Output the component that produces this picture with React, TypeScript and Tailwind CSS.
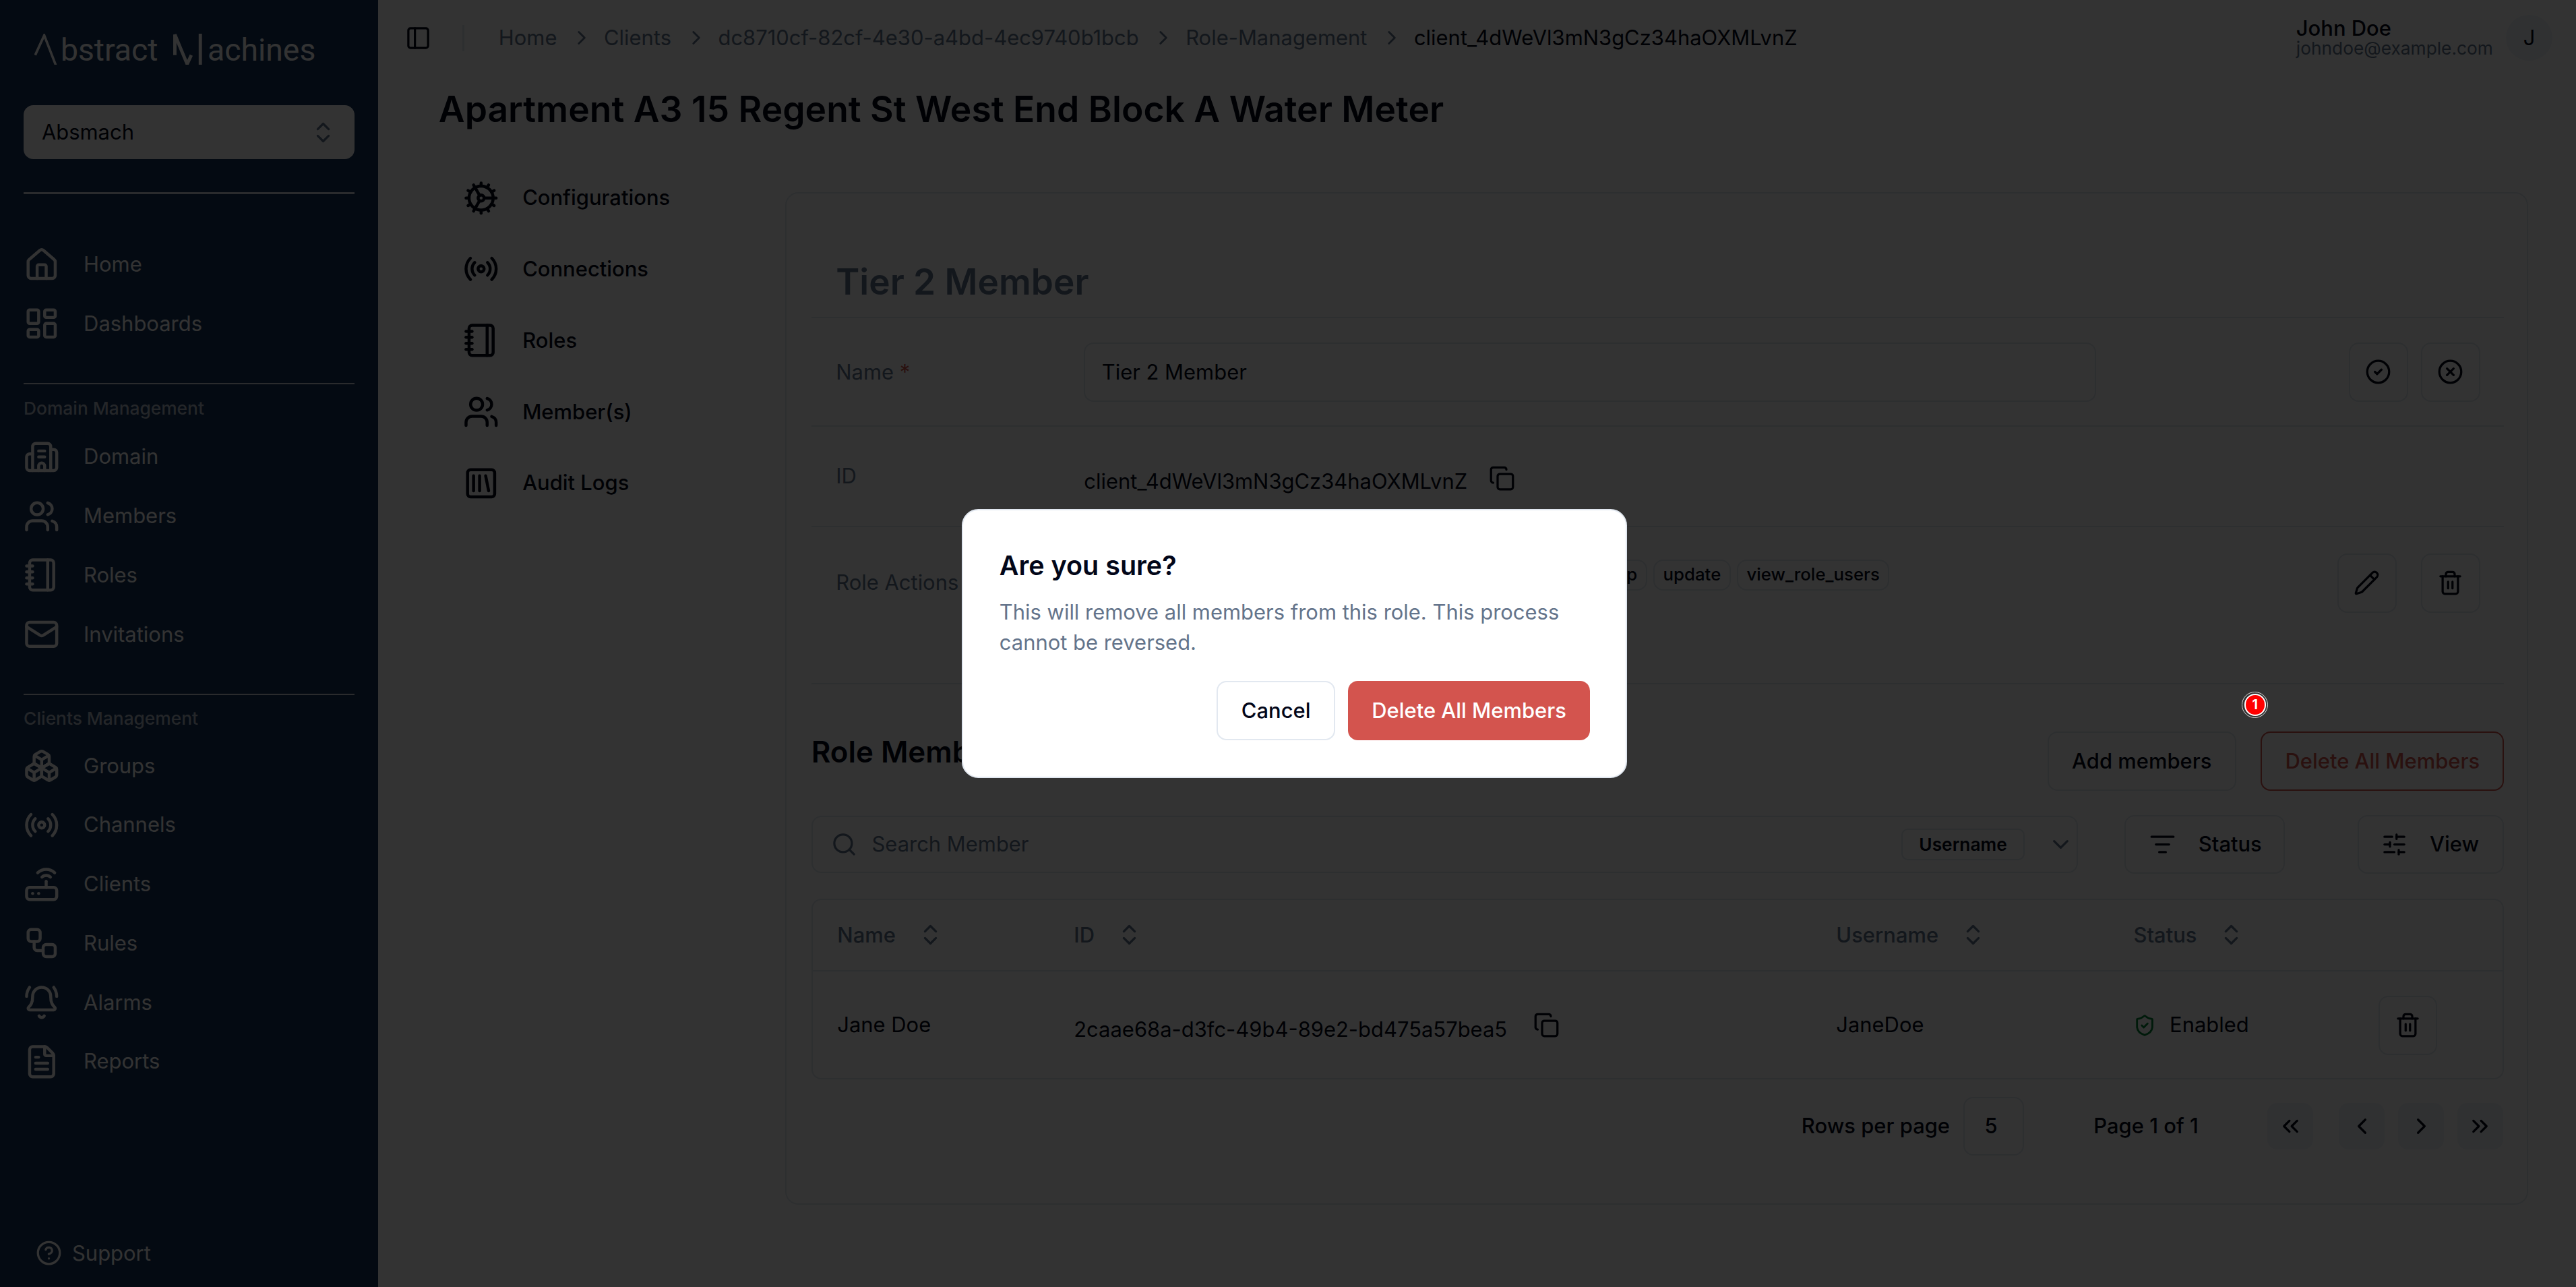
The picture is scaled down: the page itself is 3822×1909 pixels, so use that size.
import {
  BellRing,
  Boxes,
  Building2,
  ChevronDown,
  ChevronLeft,
  ChevronRight,
  ChevronsLeft,
  ChevronsRight,
  ChevronsUpDown,
  CircleCheck,
  CircleHelp,
  CircleX,
  Cog,
  Copy,
  FileText,
  House,
  LayoutDashboard,
  ListFilter,
  Mail,
  Notebook,
  PanelLeft,
  Pencil,
  Radio,
  Router,
  Search,
  ShieldCheck,
  SlidersHorizontal,
  SquareLibrary,
  Trash2,
  Users,
  Workflow,
} from 'lucide-react';

const mainNav = [
  { label: 'Home', icon: House },
  { label: 'Dashboards', icon: LayoutDashboard },
];
const domainNav = [
  { label: 'Domain', icon: Building2 },
  { label: 'Members', icon: Users },
  { label: 'Roles', icon: Notebook },
  { label: 'Invitations', icon: Mail },
];
const clientsNav = [
  { label: 'Groups', icon: Boxes },
  { label: 'Channels', icon: Radio },
  { label: 'Clients', icon: Router },
  { label: 'Rules', icon: Workflow },
  { label: 'Alarms', icon: BellRing },
  { label: 'Reports', icon: FileText },
];
const entityNav = [
  { label: 'Configurations', icon: Cog },
  { label: 'Connections', icon: Radio },
  { label: 'Roles', icon: Notebook },
  { label: 'Member(s)', icon: Users },
  { label: 'Audit Logs', icon: SquareLibrary },
];
const crumbs = ['Home', 'Clients', 'dc8710cf-82cf-4e30-a4bd-4ec9740b1bcb', 'Role-Management'];
const actions = ['read', 'delete', 'manage_role', 'add_role_users', 'remove_group', 'update', 'view_role_users'];

function NavRow({ label, icon: Icon }: { label: string; icon: any }) {
  return (
    <div className="flex h-9 items-center gap-[14.5px] text-[12.7px]">
      <Icon className="size-[22px] shrink-0" />
      <span>{label}</span>
    </div>
  );
}

function IconButton({ children }: { children: any }) {
  return (
    <button className="flex size-9 items-center justify-center rounded-md border border-slate-200">
      {children}
    </button>
  );
}

function PageButton({ children }: { children: any }) {
  return (
    <button className="flex size-7 items-center justify-center rounded-md bg-slate-100">
      {children}
    </button>
  );
}

function SortHead({ label }: { label: string }) {
  return (
    <div className="flex items-center gap-[13px] font-medium text-slate-500">
      {label}
      <ChevronsUpDown className="size-4" />
    </div>
  );
}

function Logo() {
  return (
    <div className="flex h-[64px] items-start pl-[6.5px] pt-[20.5px] text-[19px] leading-[19px] text-white [font-family:Roboto,sans-serif]">
      <svg width="14" height="19" viewBox="0 0 14 19" fill="none" stroke="currentColor" strokeWidth="1.5" className="shrink-0">
        <path d="M0.5 13 L6 1 L13 19" />
      </svg>
      <span className="ml-[2px] mt-[0.5px] w-[68.5px]">bstract</span>
      <svg width="18" height="19" viewBox="0 0 18 19" fill="none" stroke="currentColor" strokeWidth="1.5" className="shrink-0">
        <path d="M1 13 V0.5 L8.5 18.5 L11 13 M16.5 0 V19" strokeWidth="2" />
      </svg>
      <span className="ml-[3px] mt-[0.5px]">achines</span>
    </div>
  );
}

function Sidebar() {
  return (
    <aside className="flex h-full w-[230px] shrink-0 flex-col bg-[#14325a] px-[14.4px] text-white">
      <Logo />
      <div className="flex h-[33px] items-center justify-between rounded-md bg-white pl-[11px] pr-[11px] text-[12.7px] text-slate-950">
        <span>Absmach</span>
        <ChevronsUpDown className="size-4 text-slate-500" />
      </div>
      <div className="mt-5 h-px bg-white/80" />
      <nav className="mt-[25px]">
        {mainNav.map(item => (
          <NavRow key={item.label} {...item} />
        ))}
      </nav>
      <div className="mt-[18px] h-px bg-white/80" />
      <div className="mt-[6.5px] h-4 text-[10.8px] font-medium leading-4 text-white/70">Domain Management</div>
      <nav className="mt-[3.5px]">
        {domainNav.map(item => (
          <NavRow key={item.label} {...item} />
        ))}
      </nav>
      <div className="mt-[18px] h-px bg-white/80" />
      <div className="mt-[6px] h-4 text-[10.8px] font-medium leading-4 text-white/70">Clients Management</div>
      <nav className="mt-[3px]">
        {clientsNav.map(item => (
          <NavRow key={item.label} {...item} />
        ))}
      </nav>
      <div className="mb-[11px] ml-[7.5px] mt-auto flex items-center gap-[6px] text-[12.7px]">
        <CircleHelp className="size-4" />
        <span>Support</span>
      </div>
    </aside>
  );
}

function Header() {
  return (
    <header className="flex h-[46px] items-center pl-[16.5px] pr-[14.5px] text-[12.7px]">
      <PanelLeft className="size-4 text-slate-950" />
      <div className="ml-[19px] h-4 w-px bg-slate-200" />
      <div className="ml-[21px] flex items-center gap-[6.5px] text-slate-500">
        {crumbs.map(c => (
          <div key={c} className="flex items-center gap-[8px]">
            <span>{c}</span>
            <ChevronRight className="size-3.5" />
          </div>
        ))}
        <span className="text-slate-950">client_4dWeVl3mN3gCz34haOXMLvnZ</span>
      </div>
      <div className="ml-auto flex items-center gap-[8px]">
        <div className="flex flex-col">
          <span className="text-[12.7px] font-medium leading-[13px] text-slate-950">John Doe</span>
          <span className="text-[10.8px] leading-[12px] text-slate-500">johndoe@example.com</span>
        </div>
        <div className="flex size-7 items-center justify-center rounded-full bg-slate-100 text-slate-950">J</div>
      </div>
    </header>
  );
}

function RoleCard() {
  return (
    <section className="mt-[19px] h-[616px] w-[1061px] rounded-lg border border-slate-200 pl-[15px] pr-[14px] text-[12.7px]">
      <div className="flex h-[76px] items-center border-b border-slate-200 px-[15px] pt-[33px]">
        <h2 className="text-[21.8px] font-semibold text-slate-500">Tier 2 Member</h2>
      </div>

      {/* Name row */}
      <div className="flex h-[66px] items-center border-b border-slate-200 pl-[15px] pr-[14.5px]">
        <div className="w-[151px] text-slate-500">
          Name <span className="text-[#d3544e]">*</span>
        </div>
        <div className="flex h-9 w-[616px] items-center rounded-md border border-slate-200 px-[10px] text-slate-950">Tier 2 Member</div>
        <div className="ml-auto flex gap-2">
          <IconButton><CircleCheck className="size-4 text-slate-950" /></IconButton>
          <IconButton><CircleX className="size-4 text-slate-950" /></IconButton>
        </div>
      </div>

      {/* ID row */}
      <div className="flex h-[61px] items-center border-b border-slate-200 px-[15px]">
        <div className="w-[151px] text-slate-500">ID</div>
        <span className="mt-[6.5px] text-slate-950">client_4dWeVl3mN3gCz34haOXMLvnZ</span>
        <Copy className="ml-[13px] mt-[2.5px] size-4 text-slate-950" />
      </div>

      {/* Actions row */}
      <div className="flex h-[95.5px] items-start border-b border-slate-200 pl-[15px] pr-[14.5px] pt-4">
        <div className="mt-[8px] w-[151px] text-slate-500">Role Actions</div>
        <div className="mt-[3.5px] flex gap-1">
          {actions.map(a => (
            <span key={a} className="flex h-[19px] items-center rounded-md border border-slate-200 px-[5px] text-[10.6px] font-medium text-slate-950">
              {a}
            </span>
          ))}
        </div>
        <div className="ml-auto flex gap-[15px]">
          <IconButton><Pencil className="size-4 text-slate-950" /></IconButton>
          <IconButton><Trash2 className="size-4 text-slate-950" /></IconButton>
        </div>
      </div>

      {/* Members */}
      <div className="mt-[29px] flex items-start justify-between">
        <h3 className="-mt-[1.5px] text-[18px] font-semibold leading-7 text-slate-950">Role Members</h3>
        <div className="flex gap-[15px] font-medium">
          <button className="h-9 w-[115px] rounded-md border border-slate-200 text-slate-950">Add members</button>
          <button className="h-9 w-[148px] rounded-md border border-[#d3544e] text-[#d3544e]">Delete All Members</button>
        </div>
      </div>

      <div className="mt-[14.5px] flex h-9 items-center">
        <div className="flex h-[35px] w-[771px] items-center rounded-md border border-slate-200 pl-[11px] pr-[1.5px]">
          <Search className="size-4 text-slate-500" />
          <span className="ml-[9px] text-slate-500">Search Member</span>
          <span className="ml-auto flex h-[19px] items-center rounded-sm border border-slate-200 px-[10px] text-[10.8px] font-semibold text-slate-950">Username</span>
          <ChevronDown className="ml-[14px] size-4 text-slate-500" />
        </div>
        <button className="ml-[28.5px] flex h-9 w-[97.5px] items-center rounded-md border border-slate-200 pl-[14px] font-medium text-slate-950">
          <ListFilter className="size-4" />
          <span className="ml-[14px]">Status</span>
        </button>
        <button className="ml-auto flex h-9 w-[89px] items-center rounded-md border border-slate-200 pl-[13.5px] font-medium text-slate-950">
          <SlidersHorizontal className="size-4" />
          <span className="ml-[13.5px]">View</span>
        </button>
      </div>

      <div className="mt-[15px] h-[110px] rounded-md border border-slate-200">
        <table className="w-full table-fixed border-collapse">
          <thead>
            <tr className="h-[43px] border-b border-slate-200">
              <th className="w-[144px] pl-[15px] text-left font-normal"><SortHead label="Name" /></th>
              <th className="w-[464px] pl-[15px] text-left font-normal"><SortHead label="ID" /></th>
              <th className="w-[181px] pl-[15px] text-left font-normal"><SortHead label="Username" /></th>
              <th className="w-[150px] pl-[15px] text-left font-normal"><SortHead label="Status" /></th>
              <th />
            </tr>
          </thead>
          <tbody>
            <tr className="h-[66px] text-slate-950">
              <td className="pl-[15px]">Jane Doe</td>
              <td className="pl-[15px]">
                <div className="flex items-center">
                  <span className="mt-[5px]">2caae68a-d3fc-49b4-89e2-bd475a57bea5</span>
                  <Copy className="ml-4 size-4" />
                </div>
              </td>
              <td className="pl-[15px]">JaneDoe</td>
              <td className="pl-[15px]">
                <div className="flex items-center gap-[8px]">
                  <ShieldCheck className="size-[14px] text-green-700" />
                  Enabled
                </div>
              </td>
              <td className="pl-[14px]">
                <IconButton><Trash2 className="size-4" /></IconButton>
              </td>
            </tr>
          </tbody>
        </table>
      </div>

      <div className="mt-[10.5px] flex items-center justify-end pr-[0.5px] font-medium text-slate-950">
        <span>Rows per page</span>
        <div className="ml-2 flex h-9 w-[37px] items-center justify-center rounded-md border border-slate-200 pr-[3px]">5</div>
        <span className="ml-[42.5px]">Page 1 of 1</span>
        <div className="ml-[42px] flex items-center gap-2">
          <div className="mr-[7.5px]"><PageButton><ChevronsLeft className="size-4" /></PageButton></div>
          <PageButton><ChevronLeft className="size-4" /></PageButton>
          <PageButton><ChevronRight className="size-4" /></PageButton>
          <PageButton><ChevronsRight className="size-4" /></PageButton>
        </div>
      </div>
    </section>
  );
}

export default function App() {
  return (
    <div className="relative flex h-[783.18px] w-[1568px] overflow-hidden bg-white [font-family:Inter,sans-serif] [zoom:2.4375]">
      <Sidebar />
      <main className="min-w-0 flex-1">
        <Header />
        <h1 className="ml-[37px] mt-[4.5px] text-[21.9px] font-semibold leading-8 text-slate-950">
          Apartment A3 15 Regent St West End Block A Water Meter
        </h1>
        <div className="ml-[52px] mt-[15.5px] flex">
          <nav className="w-[196px] shrink-0 pt-[0.7px] text-[12.7px] font-medium text-slate-950">
            {entityNav.map(({ label, icon: Icon }) => (
              <div key={label} className="flex h-[43.4px] items-center gap-[14px]">
                <Icon className="size-[22px]" />
                <span>{label}</span>
              </div>
            ))}
          </nav>
          <RoleCard />
        </div>
      </main>

      {/* dialog overlay */}
      <div className="absolute inset-0 flex items-center justify-center bg-black/80 pl-2">
        <div className="h-[164px] w-[405px] rounded-[10px] border border-slate-200 bg-white px-[22px] pt-[22px]">
          <h2 className="text-[16.2px] font-semibold leading-6 text-slate-950">Are you sure?</h2>
          <p className="mt-[6.5px] text-[12.7px] leading-[18.5px] text-[#64748b]">
            This will remove all members from this role. This process cannot be reversed.
          </p>
          <div className="mt-[14.5px] flex justify-end gap-2 text-[12.7px] font-medium">
            <button className="h-9 w-[72px] rounded-md border border-slate-200 text-slate-950">Cancel</button>
            <button className="h-9 w-[147px] rounded-md bg-[#d3544e] text-white">Delete All Members</button>
          </div>
        </div>
      </div>

      {/* count badge */}
      <div className="absolute left-[1364.6px] top-[420.9px] flex size-4 items-center justify-center rounded-full border-[0.5px] border-white/80 p-px">
        <div className="flex size-full items-center justify-center rounded-full border border-white bg-[#ff0000] text-[8px] font-bold text-white">1</div>
      </div>
    </div>
  );
}
